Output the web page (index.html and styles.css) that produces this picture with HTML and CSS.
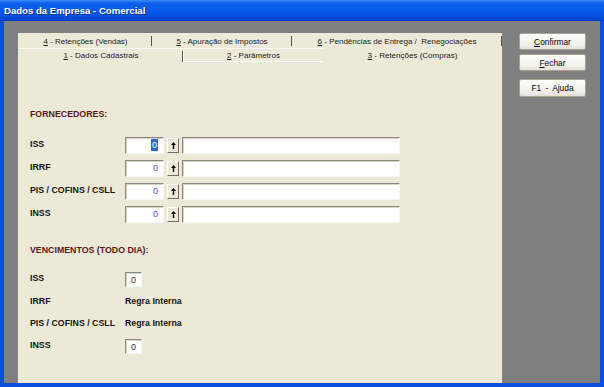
FILE: index.html
```html
<!DOCTYPE html>
<html lang="pt">
<head>
    <meta charset="UTF-8">
    <title>Dados da Empresa - Comercial</title>
    <link rel="stylesheet" href="styles.css">
</head>
<body>

<div class="window">
    <div class="titlebar">Dados da Empresa - Comercial</div>

    <div class="client">
        <div class="notebook">
            <div class="tabrow back">
                <div class="tab t4"><u>4</u> - Retenções (Vendas)</div>
                <div class="tab t5"><u>5</u> - Apuração de Impostos</div>
                <div class="tab t6"><u>6</u> - Pendências de Entrega / &nbsp;Renegociações</div>
            </div>
            <div class="tabrow front">
                <div class="tab t1"><u>1</u> - Dados Cadastrais</div>
                <div class="tab t2"><u>2</u> - Parâmetros</div>
                <div class="tab t3 active"><u>3</u> - Retenções (Compras)</div>
            </div>

            <div class="page">
                <div class="section first">FORNECEDORES:</div>
                <div class="rows">
                    <div class="row">
                        <span class="label">ISS</span>
                        <span class="num"><span class="sel">0</span></span>
                        <span class="spin"><svg width="5" height="7" viewBox="0 0 5 7"><path d="M2.5 0 L5 3 L3.2 3 L3.2 7 L1.8 7 L1.8 3 L0 3 Z" fill="#000"/></svg></span>
                        <span class="text"></span>
                    </div>
                    <div class="row">
                        <span class="label">IRRF</span>
                        <span class="num">0</span>
                        <span class="spin"><svg width="5" height="7" viewBox="0 0 5 7"><path d="M2.5 0 L5 3 L3.2 3 L3.2 7 L1.8 7 L1.8 3 L0 3 Z" fill="#000"/></svg></span>
                        <span class="text"></span>
                    </div>
                    <div class="row">
                        <span class="label">PIS / COFINS / CSLL</span>
                        <span class="num">0</span>
                        <span class="spin"><svg width="5" height="7" viewBox="0 0 5 7"><path d="M2.5 0 L5 3 L3.2 3 L3.2 7 L1.8 7 L1.8 3 L0 3 Z" fill="#000"/></svg></span>
                        <span class="text"></span>
                    </div>
                    <div class="row">
                        <span class="label">INSS</span>
                        <span class="num">0</span>
                        <span class="spin"><svg width="5" height="7" viewBox="0 0 5 7"><path d="M2.5 0 L5 3 L3.2 3 L3.2 7 L1.8 7 L1.8 3 L0 3 Z" fill="#000"/></svg></span>
                        <span class="text"></span>
                    </div>
                </div>

                <div class="section second">VENCIMENTOS (TODO DIA):</div>
                <div class="rows due">
                    <div class="row">
                        <span class="label">ISS</span>
                        <span class="day">0</span>
                    </div>
                    <div class="row">
                        <span class="label">IRRF</span>
                        <span class="rule">Regra Interna</span>
                    </div>
                    <div class="row short">
                        <span class="label">PIS / COFINS / CSLL</span>
                        <span class="rule">Regra Interna</span>
                    </div>
                    <div class="row">
                        <span class="label">INSS</span>
                        <span class="day">0</span>
                    </div>
                </div>
            </div>
        </div>

        <div class="buttons">
            <button class="btn"><u>C</u>onfirmar</button>
            <button class="btn"><u>F</u>echar</button>
            <button class="btn help">F1 - Ajuda</button>
        </div>
    </div>
</div>

</body>
</html>
```

FILE: styles.css
```css
body {
    margin: 0;
    font-family: "Liberation Sans", Arial, sans-serif;
    font-size: 8px;
    color: #000;
}
.window {
    width: 604px;
    height: 387px;
    box-sizing: border-box;
    background: #0a4fdc;
    padding: 0 4px 4px 4px;
    display: flex;
    flex-direction: column;
}
.titlebar {
    height: 21px;
    margin: 0 -4px;
    padding-left: 4px;
    box-sizing: border-box;
    line-height: 22px;
    font-size: 9.6px;
    font-weight: bold;
    color: #fff;
    text-shadow: 1px 1px 0 #0c2d96;
    background: linear-gradient(#3f8cf8 0, #0d60ec 3px, #0657e8 13px, #0448d2 20px, #0039b8 21px);
}
.client {
    flex: 1;
    background: #808080;
    display: flex;
    padding: 12px 0 0 14px;
}

/* tabbed notebook */
.notebook {
    width: 484px;
    background: #ece9d8;
    display: flex;
    flex-direction: column;
}
.tabrow {
    display: flex;
    padding-left: 1px;
}
.tabrow.back {
    height: 15px;
}
.tabrow.front {
    height: 14px;
}
.tab {
    box-sizing: border-box;
    text-align: center;
    white-space: nowrap;
    position: relative;
    color: #1a1a1a;
}
.back .tab {
    line-height: 17px;
}
.back .tab::after {
    content: "";
    position: absolute;
    right: 0;
    top: 3px;
    height: 10px;
    border-right: 1px solid #55554d;
}
.front .tab {
    line-height: 14px;
    border-top: 1px solid #fbfaf5;
}
.front .tab::after {
    content: "";
    position: absolute;
    right: 0;
    top: 2px;
    height: 11px;
    border-right: 1px solid #55554d;
}
.t4 { width: 133px; }
.t5 { width: 140px; }
.t6 { width: 210px; }
.t1 { width: 164px; }
.t2 {
    width: 140px;
    border-left: 1px solid #fff;
    border-bottom: 1px solid #fff;
}
.t3 { width: 179px; }
.front .t2::after,
.front .t3::after {
    display: none;
}
.front .t3 {
    border-top-color: #ece9d8;
}

/* page */
.page {
    padding-left: 12px;
}
.section {
    height: 12px;
    line-height: 12px;
    font-size: 8.8px;
    font-weight: bold;
    color: #5c1616;
}
.section.first {
    margin-top: 46px;
}
.section.second {
    margin-top: 18px;
}
.rows {
    margin-top: 14px;
}
.rows.due {
    margin-top: 12px;
}
.row {
    height: 23px;
    display: flex;
    align-items: center;
}
.row.short {
    height: 21px;
}
.label {
    width: 95px;
    font-size: 8.8px;
    font-weight: bold;
    color: #141414;
    padding-bottom: 4px;
}
.num,
.text,
.day {
    box-sizing: border-box;
    height: 17px;
    background: #fff;
    border-top: 1px solid #8a897f;
    border-left: 1px solid #8a897f;
    border-right: 1px solid #f7f6f1;
    border-bottom: 1px solid #f7f6f1;
    box-shadow: inset 1px 1px 0 #d8d5c6;
}
.num {
    width: 39px;
    text-align: right;
    padding-right: 5px;
    line-height: 15px;
    font-size: 9px;
    color: #4b4bd6;
}
.sel {
    background: #316ac5;
    color: #fff;
    padding: 1px 1px;
}
.spin {
    width: 12px;
    height: 15px;
    margin-left: 3px;
    box-sizing: border-box;
    background: #ece9d8;
    border-top: 1px solid #fff;
    border-left: 1px solid #fff;
    border-right: 1px solid #6f6e68;
    border-bottom: 1px solid #6f6e68;
    display: flex;
    align-items: center;
    justify-content: center;
}
.text {
    width: 218px;
    margin-left: 3px;
}
.day {
    width: 17px;
    height: 15px;
    text-align: center;
    line-height: 14px;
    font-size: 9px;
    color: #333;
}
.rule {
    font-size: 8.8px;
    font-weight: bold;
    color: #141414;
    padding-bottom: 4px;
}

/* buttons */
.buttons {
    margin-left: 17px;
    width: 67px;
    display: flex;
    flex-direction: column;
}
.btn {
    height: 17px;
    margin: 0 0 4px 0;
    padding: 0;
    font-family: "Liberation Sans", Arial, sans-serif;
    font-size: 8.4px;
    color: #000;
    background: linear-gradient(#fefefd, #f1f0ea 70%, #e3e1d7);
    border: 1px solid #a6a496;
    border-radius: 2px;
}
.btn.help {
    height: 18px;
    margin-top: 4px;
    word-spacing: 2px;
}
```
